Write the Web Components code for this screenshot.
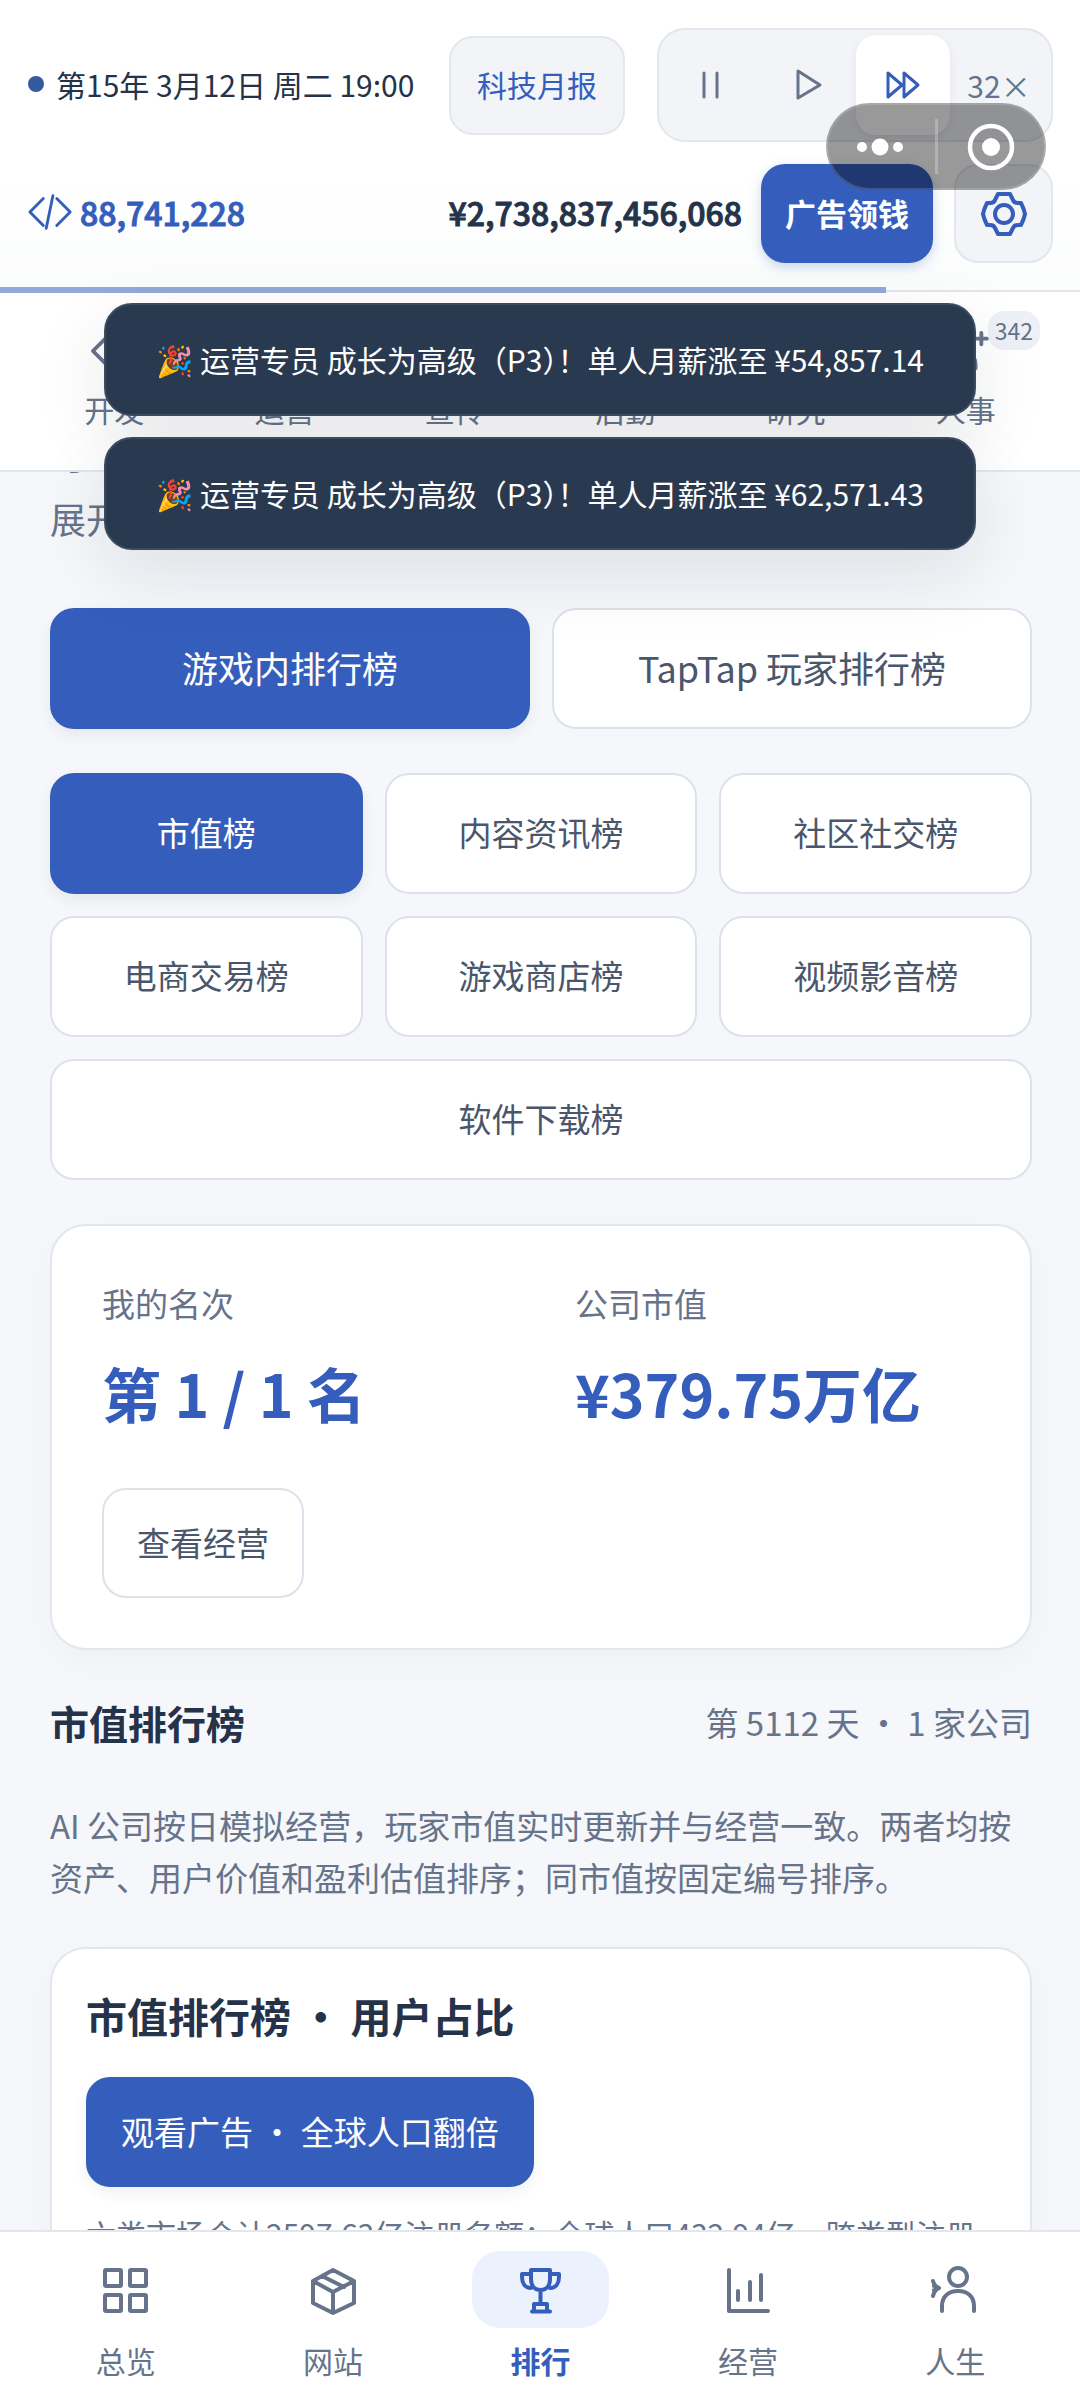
<!DOCTYPE html>
<html lang="zh-CN">
<head>
<meta charset="UTF-8">
<meta name="viewport" content="width=device-width, initial-scale=1">
<title>排行</title>
<style>
    html, body {
        height: 100%;
        margin: 0;
    }
    body {
        font-family: "Noto Sans CJK SC", "Noto Color Emoji", sans-serif;
        font-size: 30px;
        color: #24334a;
        background: #f5f7fa;
        --blue: #355ebc;
        --muted: #66738a;
        --body: #4a566c;
        --line: #e2e7ee;
        --edge: #dce2ea;
        --soft: #f2f4f8;
    }
</style>
</head>
<body>
<game-app></game-app>

<script>
const icons = {
    code: '<path d="M16 10 2 24l14 14M30 10l14 14-14 14M26 7l-7 34"/>',
    pause: '<path d="M17 12v24M30 12v24"/>',
    play: '<path d="M15 10v27l22-13z"/>',
    forward: '<path d="M9 12v24l14-12zM25 12v24l14-12z"/>',
    gear: '<path d="M18 4h12l3 6q1 3 5 3h3q3 6 4 11-1 5-4 11h-3q-4 0-5 3l-3 6H18l-3-6q-1-3-5-3H7q-3-6-4-11 1-5 4-11h3q4 0 5-3z"/><circle cx="24" cy="24" r="9"/>',
    users: '<circle cx="19" cy="14" r="8"/><path d="M4 42v-4c0-8 6-12 15-12s15 4 15 12v4M40 5v12M34 11h12"/>',
    grid: '<rect x="3" y="4" width="16" height="16" rx="1"/><rect x="28" y="4" width="16" height="16" rx="1"/><rect x="3" y="29" width="16" height="16" rx="1"/><rect x="28" y="29" width="16" height="16" rx="1"/>',
    box: '<path d="M24 4 45 15v22L24 47 4 37V15zM4 15l20 11 21-11M24 26v21M13 10l22 11"/>',
    trophy: '<path d="M15 4h19v9c0 7-4 11-9.500 11S15 20 15 13zM15 8H6v3c0 6 3 11 9 11M34 8h9v3c0 6-3 11-9 11M24.500 25v12M18 45v-7h13v7M16 45.500h18"/>',
    chart: '<path d="M5 4v41h39M14 25v9M26 16v18M37 9v25"/>',
    person: '<circle cx="27" cy="11" r="9"/><path d="M11 45v-5c0-10 7-15 16-15s16 5 16 15v5M2 15c1 4 3 6 6 7-3 1-5 4-6 8M3 20l5 2-5 2"/>'
};

class UiIcon extends HTMLElement {

    constructor() {
        super();
        this.attachShadow({ mode: "open" });
    }
    connectedCallback() {
        this.shadowRoot.innerHTML = `
        <style>
        :host {
            display: block;
            width: 48px;
            height: 48px;
            stroke-width: 4px;
        }
        svg {
            display: block;
            width: 100%;
            height: 100%;
            overflow: visible;
            fill: none;
            stroke: currentColor;
            stroke-linecap: round;
            stroke-linejoin: round;
        }
        </style>
        <svg viewBox="0 0 48 48" aria-hidden="true">${icons[this.getAttribute("name")] || ""}</svg>
        `;
    }
}

class SpeedControl extends HTMLElement {

    constructor() {
        super();
        this.attachShadow({ mode: "open" }).innerHTML = `
        <style>
        :host {
            box-sizing: border-box;
            display: grid;
            grid-template-columns: repeat(4, 94px);
            gap: 2px;
            padding: 5px;
            border: 2px solid var(--line);
            border-radius: 28px;
            background: var(--soft);
        }
        button {
            display: flex;
            align-items: center;
            justify-content: center;
            height: 100px;
            padding: 0;
            border: 0;
            border-radius: 20px;
            background: none;
            font: inherit;
            color: var(--muted);
        }
        button.on {
            background: #fff;
            color: var(--blue);
            box-shadow: 0 3px 8px rgba(36, 51, 74, .08);
        }
        ui-icon {
            stroke-width: 3px;
        }
        </style>
        <button aria-label="暂停"><ui-icon name="pause"></ui-icon></button>
        <button aria-label="播放"><ui-icon name="play"></ui-icon></button>
        <button class="on" aria-label="快进"><ui-icon name="forward"></ui-icon></button>
        <button>32×</button>
        `;
    }
}

class GameHeader extends HTMLElement {

    constructor() {
        super();
        this.attachShadow({ mode: "open" }).innerHTML = `
        <style>
        :host {
            position: relative;
            display: flex;
            flex-direction: column;
            gap: 22px;
            padding: 28px 27px 27px 28px;
            border-bottom: 2px solid var(--line);
            background: linear-gradient(#fff 60%, #fbfcfc);
        }
        .row {
            display: flex;
            align-items: center;
        }
        .date {
            display: flex;
            align-items: center;
            gap: 12px;
            padding-bottom: 3px;
            margin-right: auto;
            white-space: nowrap;
        }
        .dot {
            width: 16px;
            height: 16px;
            border-radius: 50%;
            background: #34599f;
        }
        button {
            box-sizing: border-box;
            height: 99px;
            border: 2px solid var(--line);
            border-radius: 24px;
            background: var(--soft);
            font: inherit;
            color: var(--blue);
        }
        .report {
            padding: 0 26px 3px;
            margin-right: 32px;
        }
        .ad {
            padding: 0 24px 3px;
            margin: 0 21px 0 19px;
            border: 0;
            background: var(--blue);
            font-size: 31px;
            font-weight: 700;
            color: #fff;
            box-shadow: 0 4px 12px rgba(53, 94, 188, .25);
        }
        .settings {
            display: flex;
            align-items: center;
            justify-content: center;
            width: 99px;
            padding: 0;
        }
        .users, .cash {
            padding-bottom: 3px;
            font-size: 32px;
            font-weight: 500;
            -webkit-text-stroke: 1px currentColor;
        }
        .users {
            display: flex;
            align-items: center;
            gap: 6px;
            margin-right: auto;
            color: var(--blue);
        }
        .users ui-icon {
            width: 46px;
            height: 46px;
            stroke-width: 3px;
        }
        .progress {
            position: absolute;
            left: 0;
            bottom: -3px;
            width: 82%;
            height: 6px;
            background: #92a9d9;
        }
        </style>
        <div class="row">
            <div class="date"><span class="dot"></span>第15年 3月12日 周二 19:00</div>
            <button class="report">科技月报</button>
            <speed-control></speed-control>
        </div>
        <div class="row">
            <div class="users"><ui-icon name="code"></ui-icon>88,741,228</div>
            <div class="cash">¥2,738,837,456,068</div>
            <button class="ad">广告领钱</button>
            <button class="settings" aria-label="设置"><ui-icon name="gear"></ui-icon></button>
        </div>
        <div class="progress"></div>
        `;
    }
}

class DeptNav extends HTMLElement {

    constructor() {
        super();
        this.attachShadow({ mode: "open" }).innerHTML = `
        <style>
        :host {
            display: grid;
            grid-template-columns: repeat(6, 1fr);
            padding: 0 29px;
            border-bottom: 2px solid var(--line);
            background: #fff;
        }
        a {
            position: relative;
            display: flex;
            flex-direction: column;
            align-items: center;
            gap: 13px;
            padding: 36px 0 39px;
            line-height: 44px;
            text-decoration: none;
            color: var(--muted);
        }
        ui-icon {
            width: 46px;
            height: 46px;
        }
        .badge {
            position: absolute;
            top: 19px;
            right: 11px;
            padding: 0 7px;
            border-radius: 16px;
            background: #edf1f7;
            font-size: 23px;
            line-height: 39px;
        }
        </style>
        <a href="#dev"><ui-icon name="code"></ui-icon>开发</a>
        <a href="#ops"><ui-icon name="chart"></ui-icon>运营</a>
        <a href="#pr"><ui-icon name="play"></ui-icon>宣传</a>
        <a href="#logistics"><ui-icon name="box"></ui-icon>后勤</a>
        <a href="#research"><ui-icon name="gear"></ui-icon>研究</a>
        <a href="#hr"><ui-icon name="users"></ui-icon>人事<span class="badge">342</span></a>
        `;
    }
}

class ChoiceButton extends HTMLElement {

    constructor() {
        super();
        this.attachShadow({ mode: "open" }).innerHTML = `
        <style>
        :host {
            display: block;
        }
        button {
            box-sizing: border-box;
            width: 100%;
            height: var(--h, 121px);
            padding: 0 33px 3px;
            border: 2px solid var(--edge);
            border-radius: 24px;
            background: #fff;
            font: inherit;
            color: var(--body);
        }
        :host([selected]) button {
            border-color: var(--blue);
            background: var(--blue);
            color: #fff;
            box-shadow: 0 6px 14px rgba(36, 51, 74, .07);
        }
        </style>
        <button><slot></slot></button>
        `;
    }
}

class UiCard extends HTMLElement {

    constructor() {
        super();
        this.attachShadow({ mode: "open" }).innerHTML = `
        <style>
        :host {
            display: block;
            border: 2px solid var(--line);
            border-radius: 36px;
            background: #fff;
            box-shadow: 0 12px 40px rgba(36, 51, 74, .03);
        }
        </style>
        <slot></slot>
        `;
    }
}

class StatItem extends HTMLElement {

    constructor() {
        super();
        this.attachShadow({ mode: "open" }).innerHTML = `
        <style>
        :host {
            display: flex;
            flex-direction: column;
            gap: 17px;
        }
        .label {
            font-size: 33px;
            line-height: 55px;
            color: var(--muted);
        }
        .value {
            font-size: 59px;
            font-weight: 700;
            line-height: 90px;
            white-space: nowrap;
            color: var(--blue);
        }
        </style>
        <div class="label"><slot name="label"></slot></div>
        <div class="value"><slot></slot></div>
        `;
    }
}

class RankPage extends HTMLElement {

    constructor() {
        super();
        this.attachShadow({ mode: "open" }).innerHTML = `
        <style>
        :host {
            display: block;
            padding: 0 48px 0 50px;
            font-size: 33px;
        }
        p, h2, h3 {
            margin: 0;
        }
        .intro {
            margin: -50px 0 58px;
            font-size: 36px;
            line-height: 64px;
            color: var(--muted);
        }
        .grid {
            display: grid;
            grid-template-columns: repeat(3, 1fr);
            gap: 22px;
            margin-bottom: 44px;
        }
        .two {
            grid-template-columns: repeat(2, 1fr);
            font-size: 36px;
        }
        .wide {
            grid-column: 1 / -1;
        }
        .mine {
            padding: 50px;
        }
        .stats {
            display: grid;
            grid-template-columns: 1fr 1fr;
            gap: 68px;
            margin-bottom: 50px;
        }
        .small {
            --h: 110px;
            width: max-content;
        }
        .head {
            display: flex;
            align-items: center;
            justify-content: space-between;
            margin: 42px 0 47px;
            line-height: 60px;
            color: var(--muted);
        }
        h2, h3 {
            font-weight: 700;
            color: #24334a;
        }
        h2 {
            font-size: 39px;
        }
        .note {
            margin-bottom: 44px;
            line-height: 52px;
            color: var(--muted);
        }
        .share {
            padding: 34px;
        }
        h3 {
            margin-bottom: 30px;
            font-size: 41px;
            line-height: 64px;
        }
        .share p {
            margin-top: 21px;
            font-size: 30px;
            line-height: 50px;
            white-space: nowrap;
            color: var(--muted);
        }
        </style>
        <p class="intro">可<br>展开</p>
        <div class="grid two">
            <choice-button selected>游戏内排行榜</choice-button>
            <choice-button>TapTap 玩家排行榜</choice-button>
        </div>
        <div class="grid">
            <choice-button selected>市值榜</choice-button>
            <choice-button>内容资讯榜</choice-button>
            <choice-button>社区社交榜</choice-button>
            <choice-button>电商交易榜</choice-button>
            <choice-button>游戏商店榜</choice-button>
            <choice-button>视频影音榜</choice-button>
            <choice-button class="wide">软件下载榜</choice-button>
        </div>
        <ui-card class="mine">
            <div class="stats">
                <stat-item><span slot="label">我的名次</span>第 1 / 1 名</stat-item>
                <stat-item><span slot="label">公司市值</span>¥379.75万亿</stat-item>
            </div>
            <choice-button class="small">查看经营</choice-button>
        </ui-card>
        <div class="head">
            <h2>市值排行榜</h2>
            <span>第 5112 天 · 1 家公司</span>
        </div>
        <p class="note">AI 公司按日模拟经营，玩家市值实时更新并与经营一致。两者均按资产、用户价值和盈利估值排序；同市值按固定编号排序。</p>
        <ui-card class="share">
            <h3>市值排行榜 · 用户占比</h3>
            <choice-button class="small" selected>观看广告 · 全球人口翻倍</choice-button>
            <p>六类市场合计2597.63亿注册名额；全球人口432.94亿。跨类型注册</p>
        </ui-card>
        `;
    }
}

class BottomNav extends HTMLElement {

    constructor() {
        super();
        this.attachShadow({ mode: "open" }).innerHTML = `
        <style>
        :host {
            display: grid;
            grid-template-columns: repeat(5, 1fr);
            padding: 19px 21px 18px 22px;
            border-top: 2px solid var(--line);
            background: #fff;
        }
        a {
            display: flex;
            flex-direction: column;
            align-items: center;
            gap: 10px;
            line-height: 44px;
            text-decoration: none;
            color: var(--muted);
        }
        .pill {
            display: flex;
            align-items: center;
            justify-content: center;
            width: 137px;
            height: 77px;
            border-radius: 28px;
        }
        a.on {
            font-weight: 700;
            color: var(--blue);
        }
        a.on .pill {
            background: #ebf2fe;
        }
        </style>
        <a href="#overview"><span class="pill"><ui-icon name="grid"></ui-icon></span>总览</a>
        <a href="#site"><span class="pill"><ui-icon name="box"></ui-icon></span>网站</a>
        <a class="on" href="#rank"><span class="pill"><ui-icon name="trophy"></ui-icon></span>排行</a>
        <a href="#business"><span class="pill"><ui-icon name="chart"></ui-icon></span>经营</a>
        <a href="#life"><span class="pill"><ui-icon name="person"></ui-icon></span>人生</a>
        `;
    }
}

class ToastMessage extends HTMLElement {

    constructor() {
        super();
        this.attachShadow({ mode: "open" }).innerHTML = `
        <style>
        :host {
            display: block;
            padding: 0 50px;
            border: 2px solid #3d4b5f;
            border-radius: 28px;
            background: #29394f;
            line-height: 109px;
            white-space: nowrap;
            color: #fff;
            box-shadow: 0 24px 72px rgba(20, 30, 50, .1);
        }
        /* half-width closing bracket before the exclamation mark */
        ::slotted(span) {
            font-feature-settings: "halt";
        }
        </style>
        <slot></slot>
        `;
    }
}

// floating menu of the host app
class HostCapsule extends HTMLElement {

    constructor() {
        super();
        this.attachShadow({ mode: "open" }).innerHTML = `
        <style>
        :host {
            box-sizing: border-box;
            display: grid;
            grid-template-columns: 1fr 3px 1fr;
            align-items: center;
            width: 220px;
            height: 87px;
            border: 2px solid rgba(255, 255, 255, .15);
            border-radius: 44px;
            background: rgba(0, 0, 0, .4);
        }
        button {
            display: flex;
            justify-content: center;
            padding: 0;
            border: 0;
            background: none;
        }
        i {
            height: 55px;
            background: rgba(255, 255, 255, .25);
        }
        svg {
            display: block;
            fill: #fff;
        }
        </style>
        <button aria-label="更多"><svg width="48" height="18"><circle cx="5" cy="9" r="5"/><circle cx="23" cy="9" r="8.500"/><circle cx="41" cy="9" r="5"/></svg></button>
        <i></i>
        <button aria-label="关闭"><svg width="48" height="48"><circle cx="24" cy="24" r="21" fill="none" stroke="#fff" stroke-width="4.500"/><circle cx="24" cy="24" r="9"/></svg></button>
        `;
    }
}

class GameApp extends HTMLElement {

    constructor() {
        super();
        this.attachShadow({ mode: "open" }).innerHTML = `
        <style>
        :host {
            position: relative;
            display: flex;
            flex-direction: column;
            height: 100vh;
            overflow: hidden;
        }
        main {
            flex: 1;
            min-height: 0;
            overflow: hidden;
        }
        .toasts {
            position: absolute;
            top: 303px;
            left: 0;
            right: 0;
            display: flex;
            flex-direction: column;
            align-items: center;
            gap: 21px;
        }
        host-capsule {
            position: absolute;
            top: 103px;
            right: 34px;
        }
        </style>
        <game-header></game-header>
        <dept-nav></dept-nav>
        <main><rank-page></rank-page></main>
        <bottom-nav></bottom-nav>
        <div class="toasts">
            <toast-message>🎉 运营专员 成长为高级（P3<span>）</span>！单人月薪涨至 ¥54,857.14</toast-message>
            <toast-message>🎉 运营专员 成长为高级（P3<span>）</span>！单人月薪涨至 ¥62,571.43</toast-message>
        </div>
        <host-capsule></host-capsule>
        `;
    }
}

customElements.define("ui-icon", UiIcon);
customElements.define("speed-control", SpeedControl);
customElements.define("game-header", GameHeader);
customElements.define("dept-nav", DeptNav);
customElements.define("choice-button", ChoiceButton);
customElements.define("ui-card", UiCard);
customElements.define("stat-item", StatItem);
customElements.define("rank-page", RankPage);
customElements.define("bottom-nav", BottomNav);
customElements.define("toast-message", ToastMessage);
customElements.define("host-capsule", HostCapsule);
customElements.define("game-app", GameApp);
</script>
</body>
</html>
